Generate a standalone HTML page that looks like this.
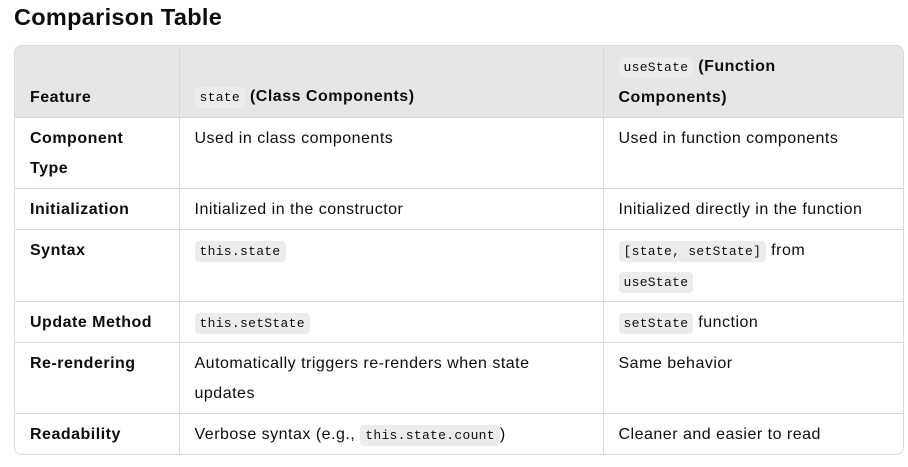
<!DOCTYPE html>
<html><head><style>
body{margin:0;background:#fff;font-family:"Liberation Sans",sans-serif;color:#0d0d0d;width:908px;height:467px;overflow:hidden}
h2{position:absolute;left:14px;top:2px;margin:0;font-size:23.5px;font-weight:700;line-height:30px;letter-spacing:0.3px}
.wrap{position:absolute;left:14px;top:45px;width:888px;border:1px solid #d9d9d9;border-radius:8px;overflow:hidden}
table{border-collapse:collapse;width:888px;table-layout:fixed;font-size:16px;line-height:30px;letter-spacing:0.5px}
td,th{padding:6px 15px 3px 15px;vertical-align:top;text-align:left;border-left:1px solid #d9d9d9;border-top:1px solid #d9d9d9;box-sizing:border-box}
tr td:first-child,tr th:first-child{border-left:none}
thead th{border-top:none;background:#e6e6e6;vertical-align:bottom;font-weight:700;padding-bottom:4px}
tbody td:first-child{font-weight:700}
code{font-family:"Liberation Mono",monospace;font-size:13px;font-weight:400;letter-spacing:0.3px;background:#ececec;border-radius:4px;padding:3px 5px}
</style></head><body>
<h2>Comparison Table</h2>
<div class="wrap"><table>
<colgroup><col style="width:164px"><col style="width:424px"><col style="width:300px"></colgroup>
<thead><tr style="height:70px"><th>Feature</th><th><code>state</code> (Class Components)</th><th><code>useState</code> (Function<br>Components)</th></tr></thead>
<tbody>
<tr style="height:71px"><td>Component<br>Type</td><td>Used in class components</td><td>Used in function components</td></tr>
<tr style="height:41px"><td>Initialization</td><td>Initialized in the constructor</td><td>Initialized directly in the function</td></tr>
<tr style="height:72px"><td>Syntax</td><td><code>this.state</code></td><td><code>[state, setState]</code> from<br><code>useState</code></td></tr>
<tr style="height:41px"><td>Update Method</td><td><code>this.setState</code></td><td><code>setState</code> function</td></tr>
<tr style="height:71px"><td>Re-rendering</td><td>Automatically triggers re-renders when state<br>updates</td><td>Same behavior</td></tr>
<tr style="height:40px"><td>Readability</td><td>Verbose syntax (e.g., <code>this.state.count</code>)</td><td>Cleaner and easier to read</td></tr>
</tbody></table></div>
</body></html>
